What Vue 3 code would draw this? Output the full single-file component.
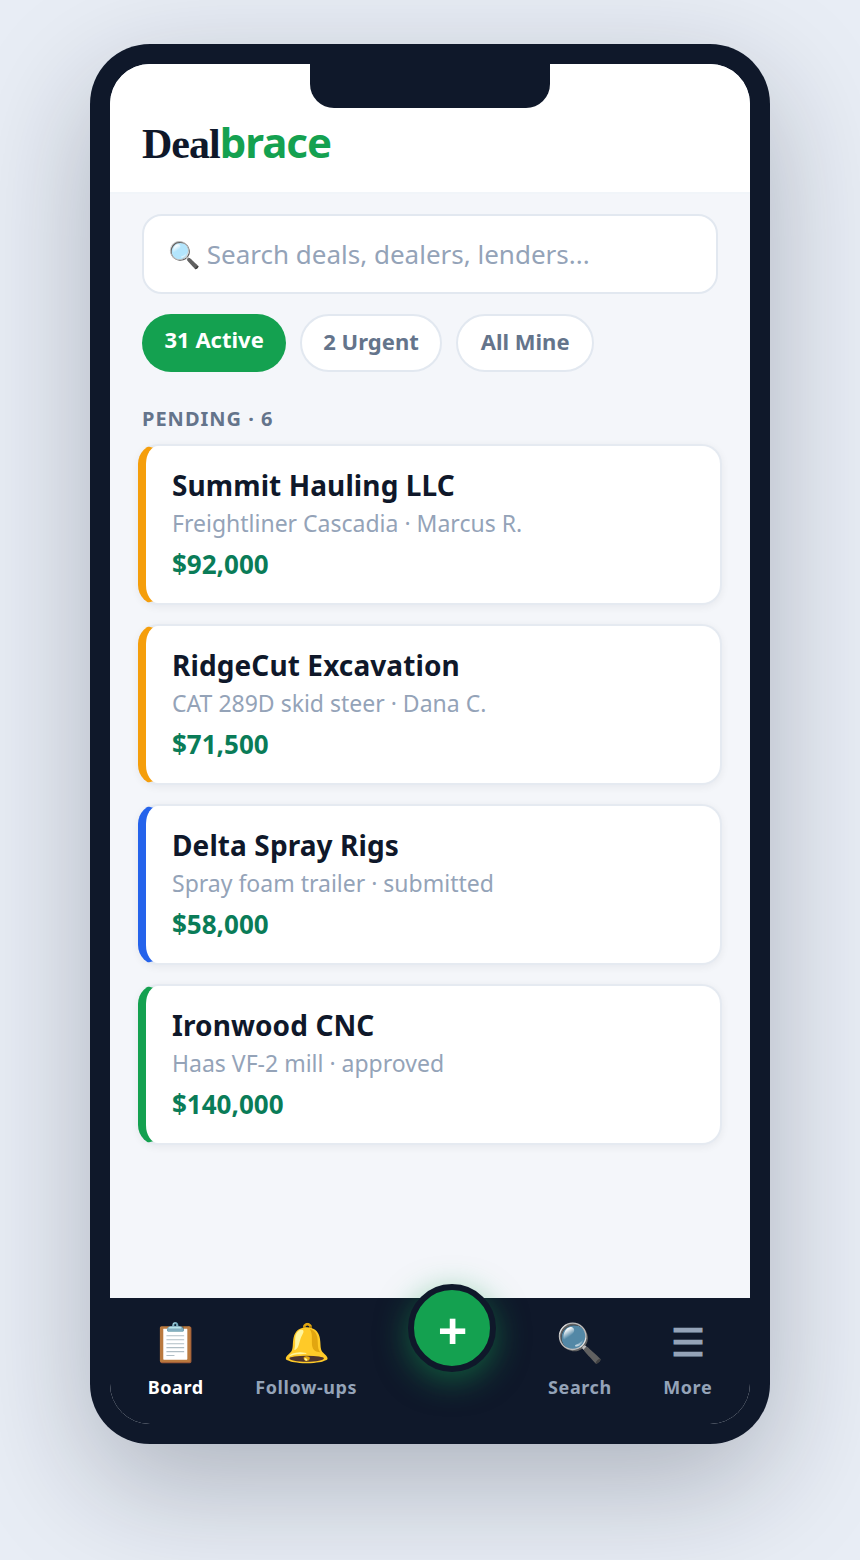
<template>
  <div class="page">
    <div class="phone">
      <div class="screen">
        <div class="notch"></div>
        <header class="header">
          <h1 class="logo">Deal<span>brace</span></h1>
        </header>
        <main class="content">
          <div class="search">🔍 Search deals, dealers, lenders...</div>
          <div class="chips">
            <div
              v-for="chip in chips"
              :key="chip.label"
              class="chip"
              :class="{ active: chip.active }"
            >{{ chip.label }}</div>
          </div>
          <div class="section-label">Pending · 6</div>
          <div class="deals">
            <div
              v-for="deal in deals"
              :key="deal.name"
              class="deal"
              :class="deal.status"
            >
              <div class="deal-name">{{ deal.name }}</div>
              <div class="deal-meta">{{ deal.meta }}</div>
              <div class="deal-amount">{{ deal.amount }}</div>
            </div>
          </div>
        </main>
        <nav class="nav">
          <div class="nav-item active">
            <span class="nav-icon">📋</span>
            <span class="nav-label">Board</span>
          </div>
          <div class="nav-item">
            <span class="nav-icon">🔔</span>
            <span class="nav-label">Follow-ups</span>
          </div>
          <button class="fab">+</button>
          <div class="nav-item">
            <span class="nav-icon">🔍</span>
            <span class="nav-label">Search</span>
          </div>
          <div class="nav-item">
            <span class="nav-icon">☰</span>
            <span class="nav-label">More</span>
          </div>
        </nav>
      </div>
    </div>
  </div>
</template>

<script setup>
const chips = [
  { label: '31 Active', active: true },
  { label: '2 Urgent', active: false },
  { label: 'All Mine', active: false }
];

const deals = [
  { name: 'Summit Hauling LLC', meta: 'Freightliner Cascadia · Marcus R.', amount: '$92,000', status: 'pending' },
  { name: 'RidgeCut Excavation', meta: 'CAT 289D skid steer · Dana C.', amount: '$71,500', status: 'pending' },
  { name: 'Delta Spray Rigs', meta: 'Spray foam trailer · submitted', amount: '$58,000', status: 'submitted' },
  { name: 'Ironwood CNC', meta: 'Haas VF-2 mill · approved', amount: '$140,000', status: 'approved' }
];
</script>

<style>
html, body {
  margin: 0;
  padding: 0;
}
</style>

<style scoped>
.page {
  width: 860px;
  height: 1560px;
  box-sizing: border-box;
  padding-top: 44px;
  display: flex;
  justify-content: center;
  align-items: flex-start;
  background: #e8edf5;
  font-family: "Noto Sans", sans-serif;
  overflow: hidden;
}

.phone {
  width: 680px;
  height: 1400px;
  box-sizing: border-box;
  padding: 20px;
  background: #0f182a;
  border-radius: 60px;
  box-shadow: 0 40px 120px rgba(15, 23, 42, 0.27);
}

.screen {
  position: relative;
  height: 1360px;
  background: #f1f5f9;
  border-radius: 40px;
  overflow: hidden;
  display: flex;
  flex-direction: column;
}

.notch {
  position: absolute;
  top: 0;
  left: 200px;
  width: 240px;
  height: 44px;
  background: #0f182a;
  border-radius: 0 0 24px 24px;
}

.header {
  height: 130px;
  box-sizing: border-box;
  padding: 52px 32px 0;
  background: #fff;
  border-bottom: 2px solid #f1f5f9;
}

.logo {
  margin: 0;
  font-family: "Liberation Serif", serif;
  font-size: 42px;
  line-height: 52px;
  font-weight: 700;
  color: #0f182a;
  letter-spacing: -1px;
}

.logo span {
  font-family: "Noto Sans", sans-serif;
  color: #14a150;
}

.content {
  flex: 1;
  padding: 20px 32px 0;
  background: #f4f6fa;
}

.search {
  height: 80px;
  box-sizing: border-box;
  padding: 0 24px;
  display: flex;
  align-items: center;
  white-space: pre;
  background: #fff;
  border: 2px solid #e2e8f0;
  border-radius: 20px;
  font-size: 26px;
  color: #94a3b8;
}

.chips {
  display: flex;
  gap: 14px;
  margin-top: 20px;
}

.chip {
  height: 58px;
  box-sizing: border-box;
  padding: 10px 21px 0;
  background: #fff;
  border: 2px solid #e2e8f0;
  border-radius: 29px;
  font-size: 22px;
  line-height: 30px;
  font-weight: 700;
  color: #64748b;
}

.chip:last-child {
  padding: 10px 22px 0 23px;
}

.chip.active {
  padding: 10px 22.5px 0;
  background: #14a150;
  border: none;
  color: #fff;
}

.section-label {
  margin-top: 32px;
  font-size: 20px;
  line-height: 30px;
  font-weight: 700;
  letter-spacing: 1px;
  text-transform: uppercase;
  color: #64748b;
}

.deals {
  display: flex;
  flex-direction: column;
  gap: 19px;
  margin: 10px -4px 0;
}

.deal {
  height: 161px;
  box-sizing: border-box;
  padding: 20px 24px 0 26px;
  background: #fff;
  border: 2px solid #e5eaf1;
  border-left: 8px solid #f59e0b;
  border-radius: 20px;
  box-shadow: 0 2px 8px rgba(15, 23, 42, 0.06);
}

.deal.submitted {
  border-left-color: #2563eb;
}

.deal.approved {
  border-left-color: #14a150;
}

.deal-name {
  font-size: 28px;
  line-height: 38px;
  font-weight: 700;
  letter-spacing: 0.1px;
  color: #0f182a;
}

.deal-meta {
  font-size: 23px;
  line-height: 38px;
  color: #94a3b8;
}

.deal-amount {
  margin-top: 1px;
  font-size: 26px;
  line-height: 42px;
  font-weight: 700;
  color: #0a7c58;
}

.nav {
  height: 126px;
  padding: 0 12px;
  display: flex;
  justify-content: space-around;
  align-items: flex-start;
  background: #0f182a;
}

.nav-item {
  display: flex;
  flex-direction: column;
  align-items: center;
  padding-top: 16px;
}

.nav-icon {
  font-size: 38px;
  line-height: 54px;
  font-weight: 700;
  color: #94a3b8;
}

.nav-label {
  margin-top: 6px;
  font-size: 18px;
  line-height: 26px;
  font-weight: 700;
  letter-spacing: 0.6px;
  color: #94a3b8;
}

.nav-item.active .nav-label {
  color: #fff;
}

.fab {
  width: 88px;
  height: 88px;
  margin: -14px 1px 0 -1px;
  padding: 3px 0 0 2px;
  box-sizing: border-box;
  background: #14a150;
  border: 6px solid #0f182a;
  border-radius: 50%;
  box-shadow: 0 8px 32px rgba(20, 161, 80, 0.5);
  font-family: inherit;
  font-size: 52px;
  line-height: 1;
  font-weight: 700;
  color: #fff;
}
</style>
